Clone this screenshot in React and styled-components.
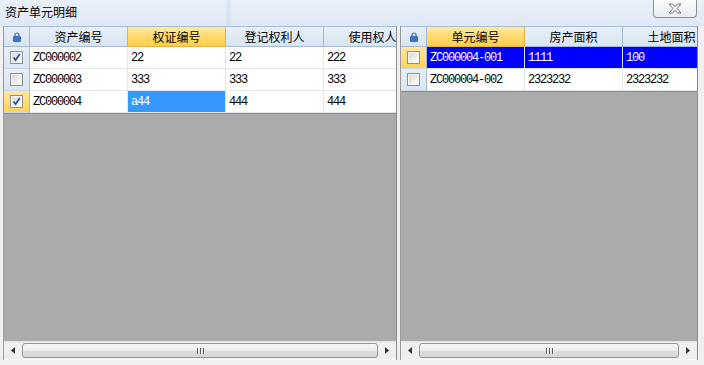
import React from 'react'
import styled, { createGlobalStyle, css } from 'styled-components'

const GlobalStyle = createGlobalStyle`
  html, body {
    margin: 0;
    padding: 0;
    background: #f0f0f0;
  }
  body {
    font-family: "Liberation Sans", "Noto Sans CJK SC", sans-serif;
  }
`

const leftGrid = {
  columns: ['资产编号', '权证编号', '登记权利人', '使用权人'],
  activeColumn: 1,
  rows: [
    { checked: true, cells: ['ZC000002', '22', '22', '222'] },
    { checked: false, cells: ['ZC000003', '333', '333', '333'] },
    { checked: true, current: true, activeCell: 1, cells: ['ZC000004', 'a44', '444', '444'] }
  ]
}

const rightGrid = {
  columns: ['单元编号', '房产面积', '土地面积'],
  activeColumn: 0,
  rows: [
    { checked: false, current: true, selected: true, cells: ['ZC000004-001', '1111', '100'] },
    { checked: false, cells: ['ZC000004-002', '2323232', '2323232'] }
  ]
}

function LockIcon() {
  return (
    <svg width="8" height="10" viewBox="0 0 8 10">
      <path d="M2 4.5 V3 a2 2 0 0 1 4 0 V4.5" fill="none" stroke="#3a67b8" strokeWidth="1.2" />
      <rect x="0.5" y="4.5" width="7" height="5" rx="0.5" fill="#3f74cf" stroke="#2d559c" strokeWidth="0.8" />
    </svg>
  )
}

function CheckBox({ checked }) {
  return (
    <Box>
      {checked && (
        <svg width="11" height="11" viewBox="0 0 11 11">
          <path d="M2.5 5.5 L4.6 8 L8.8 2" fill="none" stroke="#2a4fa0" strokeWidth="1.8" />
        </svg>
      )}
    </Box>
  )
}

function ScrollBar() {
  return (
    <Scroll>
      <Arrow>
        <svg width="4" height="7" viewBox="0 0 4 7"><path d="M4 0 L0 3.5 L4 7 Z" fill="#333" /></svg>
      </Arrow>
      <Thumb>
        <Grip><i /><i /><i /></Grip>
      </Thumb>
      <Arrow>
        <svg width="4" height="7" viewBox="0 0 4 7"><path d="M0 0 L4 3.5 L0 7 Z" fill="#333" /></svg>
      </Arrow>
    </Scroll>
  )
}

function DataGrid({ grid, width }) {
  return (
    <Panel $width={width}>
      <GridArea>
        <Row>
          <HeaderCorner><LockIcon /></HeaderCorner>
          {grid.columns.map((c, i) => (
            <HeaderCell key={c} $active={i === grid.activeColumn}>{c}</HeaderCell>
          ))}
        </Row>
        {grid.rows.map((r, ri) => (
          <Row key={ri}>
            <RowHeader $current={r.current}><CheckBox checked={r.checked} /></RowHeader>
            {r.cells.map((v, ci) => (
              <Cell key={ci} $selected={r.selected} $active={r.activeCell === ci}>{v}</Cell>
            ))}
          </Row>
        ))}
        <Empty />
      </GridArea>
      <ScrollBar />
    </Panel>
  )
}

export default function App() {
  return (
    <Window>
      <GlobalStyle />
      <TitleBar>
        <Title>资产单元明细</Title>
        <CloseButton>
          <svg width="14" height="11" viewBox="0 0 14 11">
            <path
              d="M1 1 H4.5 L7 3.8 L9.5 1 H13 L9 5.5 L13 10 H9.5 L7 7.2 L4.5 10 H1 L5 5.5 Z"
              fill="#fff"
              stroke="#6d6d6d"
              strokeWidth="1"
            />
          </svg>
        </CloseButton>
      </TitleBar>
      <Body>
        <DataGrid grid={leftGrid} width={394} />
        <DataGrid grid={rightGrid} width={298} />
      </Body>
    </Window>
  )
}

const Window = styled.div`
  width: 704px;
  height: 365px;
  display: flex;
  flex-direction: column;
  background: #f0f0f0;
  overflow: hidden;
`

const TitleBar = styled.div`
  height: 26px;
  display: flex;
  justify-content: space-between;
  align-items: flex-start;
  padding: 0 7px 0 5px;
  box-sizing: border-box;
  background:
    linear-gradient(90deg, rgba(255,255,255,0) 0%, rgba(255,255,255,0) 32%, rgba(200,218,238,0.6) 32.4%, rgba(255,255,255,0) 33%),
    linear-gradient(180deg, #e9f0f9 0%, #dfe9f5 100%);
`

const Title = styled.div`
  font-family: "Noto Sans CJK SC", sans-serif;
  font-size: 12px;
  line-height: 12px;
  padding-top: 6px;
  color: #000;
`

const CloseButton = styled.div`
  width: 44px;
  height: 18px;
  box-sizing: border-box;
  border: 1px solid #8a8f96;
  border-top: none;
  border-radius: 0 0 4px 4px;
  background: linear-gradient(180deg, #fbfbfb 0%, #e8ecf1 100%);
  display: flex;
  align-items: center;
  justify-content: center;
`

const Body = styled.div`
  flex: 1;
  display: flex;
  gap: 3px;
  padding: 0 0 5px 3px;
`

const Panel = styled.div`
  width: ${p => p.$width}px;
  display: flex;
  flex-direction: column;
  border-left: 1px solid #9a9a9a;
  border-right: 1px solid #8c8c8c;
  box-sizing: border-box;
  overflow: hidden;
`

const GridArea = styled.div`
  flex: 1;
  display: flex;
  flex-direction: column;
  background: #ababab;
  overflow: hidden;
`

const Row = styled.div`
  display: flex;
  flex-shrink: 0;
`

const headerBase = css`
  height: 21px;
  box-sizing: border-box;
  border-top: 1px solid #a9bdd3;
  border-right: 1px solid #a5bad1;
  border-bottom: 1px solid #a5bad1;
  display: flex;
  align-items: center;
  justify-content: center;
  flex-shrink: 0;
`

const HeaderCorner = styled.div`
  ${headerBase}
  width: 26px;
  background: linear-gradient(180deg, #e8eff8 0%, #d8e5f3 100%);
`

const HeaderCell = styled.div`
  ${headerBase}
  width: 98px;
  font-family: "Noto Sans CJK SC", sans-serif;
  font-size: 12px;
  color: #000;
  white-space: nowrap;
  background: ${p => (p.$active
    ? 'linear-gradient(180deg, #ffe9a8 0%, #ffd866 55%, #ffcf4d 100%)'
    : 'linear-gradient(180deg, #e8eff8 0%, #d8e5f3 100%)')};
  border-bottom-color: ${p => (p.$active ? '#eeb23a' : '#a5bad1')};
  border-right-color: ${p => (p.$active ? '#e2b14a' : '#a5bad1')};
`

const RowHeader = styled.div`
  width: 26px;
  height: 22px;
  box-sizing: border-box;
  flex-shrink: 0;
  border-right: 1px solid #a5bad1;
  border-bottom: 1px solid #c9d6e4;
  display: flex;
  align-items: center;
  justify-content: center;
  background: ${p => (p.$current
    ? 'linear-gradient(180deg, #ffe7a0 0%, #ffd35a 100%)'
    : 'linear-gradient(180deg, #e6eef8 0%, #dae6f3 100%)')};
`

const Box = styled.div`
  width: 13px;
  height: 13px;
  box-sizing: border-box;
  border: 1px solid #8f8f8f;
  background: linear-gradient(135deg, #d6d6d6 0%, #f4f4f4 70%, #ffffff 100%);
  box-shadow: inset 0 0 0 1px #f6f6f6;
  display: flex;
  align-items: center;
  justify-content: center;
`

const Cell = styled.div`
  width: 98px;
  height: 22px;
  box-sizing: border-box;
  flex-shrink: 0;
  padding-left: 3px;
  border-right: 1px solid #dfe5eb;
  border-bottom: 1px solid #dfe5eb;
  display: flex;
  align-items: center;
  font-family: "Liberation Mono", monospace;
  font-size: 12px;
  letter-spacing: -1.2px;
  white-space: nowrap;
  overflow: hidden;
  color: ${p => (p.$selected || p.$active ? '#fff' : '#000')};
  background: ${p => (p.$selected ? '#0000ff' : p.$active ? '#3399ff' : '#fff')};
`

const Empty = styled.div`
  flex: 1;
  border-top: 1px solid #8d8d8d;
  background: #ababab;
`

const Scroll = styled.div`
  height: 17px;
  flex-shrink: 0;
  display: flex;
  align-items: stretch;
  background: #efefef;
  border-top: 1px solid #e2e2e2;
  border-bottom: 1px solid #f7f7f7;
`

const Arrow = styled.div`
  width: 18px;
  flex-shrink: 0;
  display: flex;
  align-items: center;
  justify-content: center;
`

const Thumb = styled.div`
  flex: 1;
  margin: 1px 0;
  box-sizing: border-box;
  border: 1px solid #959595;
  border-radius: 3px;
  background: linear-gradient(180deg, #f6f6f6 0%, #ececec 50%, #dcdcdc 51%, #d6d6d6 100%);
  display: flex;
  align-items: center;
  justify-content: center;
`

const Grip = styled.div`
  display: flex;
  gap: 2px;
  i {
    display: block;
    width: 1px;
    height: 6px;
    background: #5a5a5a;
    box-shadow: 1px 0 0 #fafafa;
  }
`
